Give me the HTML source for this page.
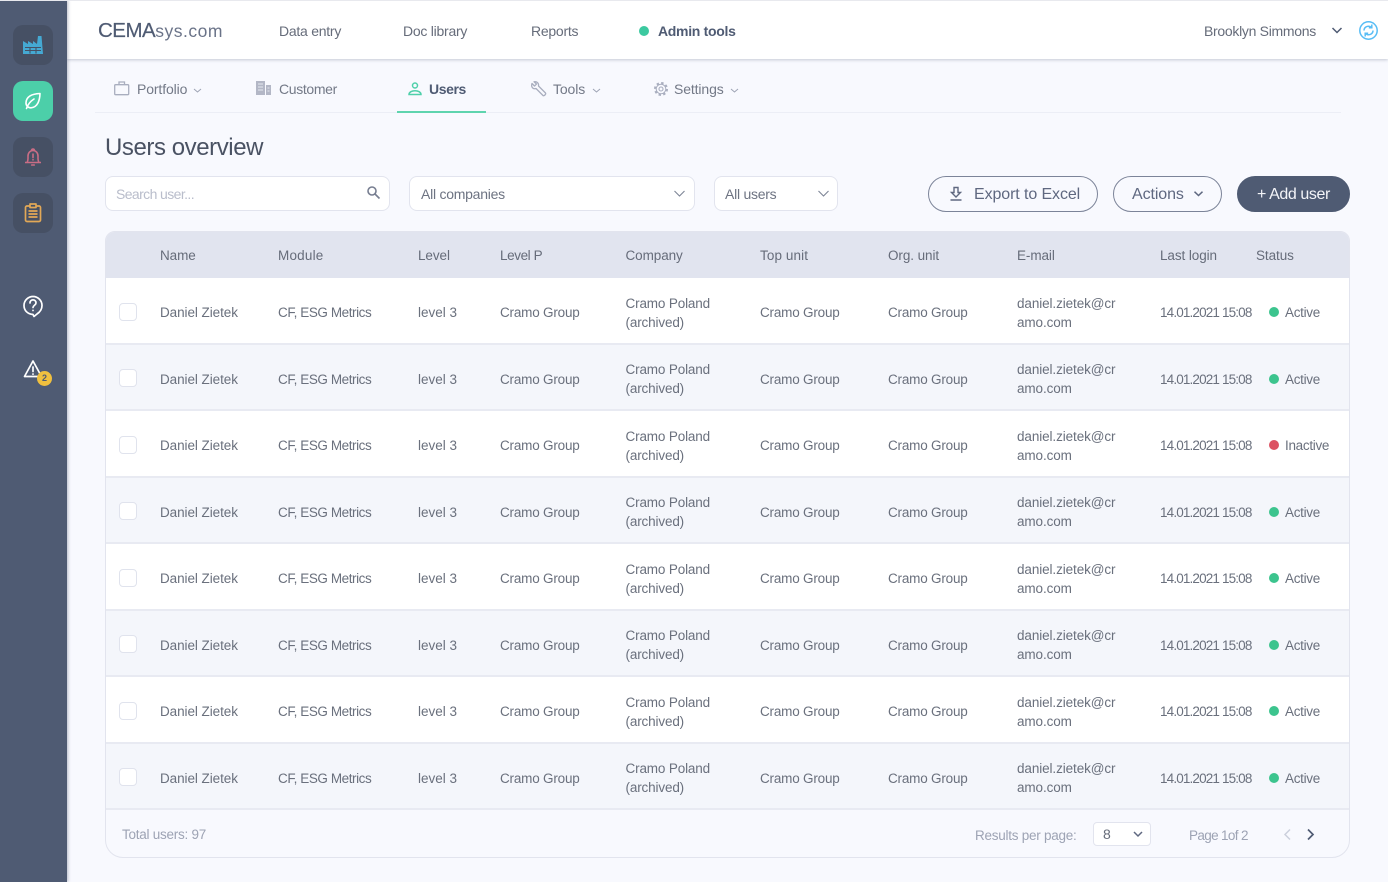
<!DOCTYPE html>
<html><head><meta charset="utf-8"><title>Users overview</title>
<style>
*{box-sizing:border-box}
html,body{margin:0;padding:0;width:1388px;height:882px;overflow:hidden;background:#f8f9fe;font-family:"Liberation Sans",sans-serif;color:#666c7a}
.a{position:absolute;white-space:nowrap}
svg{position:absolute;overflow:visible}
#side{position:absolute;left:0;top:0;width:67px;height:882px;background:#4f5b73;box-shadow:1px 0 3px rgba(60,70,100,.35);z-index:3}
.sb{position:absolute;left:13px;width:40px;height:40px;border-radius:10px;background:#465064}
#top{position:absolute;left:67px;top:1px;width:1321px;height:58px;background:#fff;box-shadow:0 1px 3px rgba(80,90,120,.3);z-index:2}
.nav{font-size:14px;letter-spacing:-.25px;color:#666c7a;top:22px;line-height:18px}
.tab{font-size:14px;letter-spacing:-.12px;color:#737987;top:80px;line-height:18px}
.box{position:absolute;background:#fff;border:1px solid #e2e4ee;border-radius:8px;height:35px;top:176px}
.bt{position:absolute;top:176px;height:36px;border-radius:18px;border:1px solid #7c8499;font-size:16px;color:#5f6880;letter-spacing:-.1px;line-height:35px}
#tbl{position:absolute;left:105px;top:231px;width:1245px;height:627px;border:1px solid #e2e4ee;border-radius:10px 10px 18px 18px;overflow:hidden;background:#f8f9fe}
#th{position:absolute;left:0;top:0;width:1243px;height:46px;background:#e1e4ef}
.h{position:absolute;top:15px;line-height:18px;font-size:13.5px;letter-spacing:-.08px;color:#666c7a;white-space:nowrap}
.r{position:absolute;left:0;width:1243px;height:66.5px;border-bottom:2px solid #e8eaf2;font-size:13.5px;letter-spacing:-.3px;color:#6a707d;background:#fff}
.g{background:#f4f6fb}
.r span{position:absolute;white-space:nowrap;top:26px;line-height:18px}
.r span.t{top:15.5px;line-height:19px}
.r i{position:absolute;left:13px;top:24.5px;width:18px;height:18px;background:#fff;border:1.5px solid #e0e3ed;border-radius:4px}
.r b{position:absolute;left:1163px;top:29px;width:10px;height:10px;border-radius:50%;background:#3cc48e}
.r b.x{background:#dc5262}
.n{left:54px;letter-spacing:-.07px}.m{left:172px;letter-spacing:-.43px}.l{left:312px;letter-spacing:0}.p{left:394px;letter-spacing:-.2px}.c{left:519.5px;letter-spacing:-.15px}.o{left:654px;letter-spacing:-.2px}.u{left:782px;letter-spacing:-.2px}.e{left:911px;letter-spacing:-.1px}.d{left:1054px;letter-spacing:-.85px}.s{left:1179px}
.ft{font-size:13.5px;letter-spacing:-.25px;color:#9da3b4;line-height:18px}
</style></head><body>
<div id="side">
<div class="sb" style="top:25px"></div>
<div class="sb" style="top:81px;background:#4ccfa9"></div>
<div class="sb" style="top:137px"></div>
<div class="sb" style="top:193px"></div>
<svg style="left:23px;top:35px" width="20" height="20" viewBox="0 0 20 20"><path fill="#45a9d3" d="M0 6l5 3V6l5 3V6l4 3 1-8h3.5L20 19H0z"/><path stroke="#465064" stroke-width="1.1" d="M2 12.5h16M2 15.500h16M7 12.500v6M13 12.500v6"/></svg>
<svg style="left:24px;top:92px" width="18" height="18" viewBox="0 0 18 18" fill="none" stroke="#fff" stroke-width="1.600" stroke-linecap="round" stroke-linejoin="round"><path d="M16 1.500C9 1.800 2.500 4 2 10.500c-.2 3 2 5.500 5 5.300C13.500 15.300 15.800 8.500 16 1.500zM2.500 16.500C4 12 6 9.500 10 7"/></svg>
<svg style="left:24px;top:147px" width="18" height="20" viewBox="0 0 18 20" fill="none" stroke="#c96d85" stroke-width="1.600" stroke-linejoin="round"><path d="M1 15.500h16M3 15.500c1.300-2 1-4 1-6.500 0-3 2-5.500 5-5.500s5 2.500 5 5.500c0 2.500-.3 4.500 1 6.500M7.500 3.500C7.800 1.500 10.200 1.500 10.500 3.500"/><path stroke-linecap="round" d="M9 7v3.500M9 12.500v.4M7.700 18h2.600"/></svg>
<svg style="left:24px;top:203px" width="18" height="20" viewBox="0 0 18 20" fill="none" stroke="#e2a857" stroke-width="1.700" stroke-linejoin="round"><rect x="1.500" y="3" width="15" height="15.500" rx="1.500"/><rect x="6" y="1" width="6" height="3.500" fill="#465064"/><path d="M4.500 8h9M4.500 11h9M4.500 14h9"/></svg>
<svg style="left:22px;top:294px" width="22" height="24" viewBox="0 0 22 24" fill="none" stroke="#fff" stroke-width="1.700" stroke-linecap="round" stroke-linejoin="round"><path d="M11 20.500C5.500 20 2 16.500 2 11.500a9 9 0 1 1 18 0c0 4-2 6.500-5 8.500l-3 2.500z"/><path d="M8 9c0-4.200 6-4.200 6 0 0 2-3 2.500-3 4.500M11 16.300v.2"/></svg>
<svg style="left:23px;top:359px" width="20" height="20" viewBox="0 0 20 20" fill="none" stroke="#fff" stroke-width="1.700" stroke-linecap="round" stroke-linejoin="round"><path d="M10 2L1.500 17.500h17zM10 8v4.500M10 15v.2"/></svg>
<div class="a" style="left:37px;top:371px;width:15px;height:15px;border-radius:50%;background:#f0c03f;color:#4f5b73;font-size:9px;font-weight:bold;text-align:center;line-height:15px">2</div>
</div>

<div style="position:absolute;left:0;top:0;width:1388px;height:1px;background:#e8e9ee;z-index:4"></div>
<div id="top"></div>
<div style="position:absolute;left:0;top:0;z-index:3">
<div class="a" style="left:98px;top:18px;font-size:20.500px;line-height:25px;color:#4f5b73;letter-spacing:-.5px;-webkit-text-stroke:.2px #4f5b73">CEMA<span style="font-size:17.500px;letter-spacing:.5px;color:#6a7388;-webkit-text-stroke:0">sys.com</span></div>
<div class="a nav" style="left:279px">Data entry</div>
<div class="a nav" style="left:403px">Doc library</div>
<div class="a nav" style="left:531px">Reports</div>
<div class="a" style="left:639px;top:26px;width:10px;height:10px;border-radius:50%;background:#3cc9a0"></div>
<div class="a nav" style="left:658px;font-weight:bold;color:#4f5b73;letter-spacing:-.3px">Admin tools</div>
<div class="a nav" style="left:1204px;letter-spacing:-.3px">Brooklyn Simmons</div>
<svg style="left:1332px;top:27px" width="10" height="7" fill="none" stroke="#4f5b73" stroke-width="1.500"><path d="M.5 1l4.500 4.500L9.500 1"/></svg>
<svg style="left:1359px;top:21px" width="19" height="19" viewBox="0 0 19 19" fill="none" stroke="#58bdf5" stroke-width="1.500"><circle cx="9.500" cy="9.500" r="8.700"/><path d="M5 9.500c0-3 3-5 6-4l1.500 1M14 9.500c0 3-3 5-6 4l-1.500-1M12.800 3.500v3.300H9.800M6.200 15.500v-3.300h3"/></svg>
</div>

<!-- tabs -->
<svg style="left:114px;top:81px" width="16" height="15" fill="none" stroke="#a9aebf" stroke-width="1.300"><rect x=".7" y="3.700" width="14" height="10" rx="1"/><path d="M5 3.500V1h5.500v2.500"/></svg>
<div class="a tab" style="left:137px">Portfolio</div>
<svg style="left:193px;top:88px" width="9" height="6" fill="none" stroke="#9da3b4"><path d="M1 1l3.500 3L8 1"/></svg>
<svg style="left:256px;top:81px" width="15" height="14"><path fill="#b3b7c6" d="M0 0h9v14H0zM10 4h5v10h-5z"/><path stroke="#f8f9fe" stroke-width=".8" d="M2 3h5M2 6h5M2 9h5M11.500 7h2M11.500 10h2"/></svg>
<div class="a tab" style="left:279px;letter-spacing:-.35px">Customer</div>
<svg style="left:408px;top:82px" width="14" height="14" fill="none" stroke="#4fd0aa" stroke-width="1.500"><circle cx="7" cy="3.500" r="2.500"/><path d="M1 12.500c0-5 12-5 12 0z"/></svg>
<div class="a tab" style="left:429px;font-weight:bold;color:#4f5b73;letter-spacing:-.4px">Users</div>
<svg style="left:530px;top:81px" width="17" height="17" fill="none" stroke="#a9aebf" stroke-width="1.300" stroke-linejoin="round"><path d="M2 2.500L4.500 5l2-2L4 .8C6.500.2 9 2 8.500 5l7 7c.8 1-1.500 3.500-2.500 2.500l-7-7C3 8.500.8 6 2 2.500z"/></svg>
<div class="a tab" style="left:553px">Tools</div>
<svg style="left:592px;top:88px" width="9" height="6" fill="none" stroke="#9da3b4"><path d="M1 1l3.500 3L8 1"/></svg>
<svg style="left:654px;top:82px" width="14" height="14" fill="none" stroke="#a9aebf"><circle cx="7" cy="7" r="6" stroke-width="2" stroke-dasharray="2.400 2.310"/><circle cx="7" cy="7" r="4.800" stroke-width="1"/><circle cx="7" cy="7" r="2" stroke-width="1.100"/></svg>
<div class="a tab" style="left:674px">Settings</div>
<svg style="left:730px;top:88px" width="9" height="6" fill="none" stroke="#9da3b4"><path d="M1 1l3.500 3L8 1"/></svg>
<div class="a" style="left:95px;top:112px;width:1246px;height:1px;background:#eceef6"></div>
<div class="a" style="left:397px;top:111px;width:89px;height:2px;background:#5fd4ae"></div>

<div class="a" style="left:105px;top:132px;font-size:24px;line-height:31px;color:#4a5263;letter-spacing:-.43px">Users overview</div>

<div class="box" style="left:105px;width:285px"></div>
<div class="a" style="left:116px;top:185px;font-size:14px;line-height:18px;color:#b9bdcb;letter-spacing:-.6px">Search user...</div>
<svg style="left:367px;top:186px" width="13" height="13" fill="none" stroke="#767d90" stroke-width="1.600"><circle cx="5" cy="5" r="4"/><path d="M8 8l4.500 4.500"/></svg>
<div class="box" style="left:409px;width:286px"></div>
<div class="a" style="left:421px;top:185px;font-size:14px;line-height:18px;color:#6d7382;letter-spacing:-.25px">All companies</div>
<svg style="left:674px;top:190px" width="11" height="7" fill="none" stroke="#7d8496" stroke-width="1.100"><path d="M.5 1l5 5 5-5"/></svg>
<div class="box" style="left:714px;width:124px"></div>
<div class="a" style="left:725px;top:185px;font-size:14px;line-height:18px;color:#6d7382;letter-spacing:-.25px">All users</div>
<svg style="left:818px;top:190px" width="11" height="7" fill="none" stroke="#7d8496" stroke-width="1.100"><path d="M.5 1l5 5 5-5"/></svg>

<div class="bt" style="left:928px;width:170px"><span class="a" style="left:45px">Export to Excel</span></div>
<svg style="left:950px;top:187px" width="12" height="14" fill="none" stroke="#5f6880" stroke-width="1.400"><path d="M4 0.500h4v5h2.500L6 10 1.500 5.500H4zM.5 13h11"/></svg>
<div class="bt" style="left:1113px;width:109px"><span class="a" style="left:18px">Actions</span></div>
<svg style="left:1194px;top:191px" width="9" height="6" fill="none" stroke="#5f6880" stroke-width="1.500"><path d="M.5 .7l4 3.800 4-3.800"/></svg>
<div class="bt" style="left:1237px;width:113px;background:#4f5b73;border-color:#4f5b73;color:#f3f4f8"><span class="a" style="left:19px;letter-spacing:-.4px">+ Add user</span></div>

<div id="tbl">
<div id="th">
<div class="h" style="left:54px">Name</div><div class="h" style="left:172px;letter-spacing:.2px">Module</div><div class="h" style="left:312px">Level</div><div class="h" style="left:394px;letter-spacing:-.4px">Level P</div><div class="h" style="left:519.500px">Company</div><div class="h" style="left:654px;letter-spacing:.1px">Top unit</div><div class="h" style="left:782px">Org. unit</div><div class="h" style="left:911px">E-mail</div><div class="h" style="left:1054px">Last login</div><div class="h" style="left:1150px">Status</div>
</div>
<div class="r" style="top:46px"><i></i><span class="n">Daniel Zietek</span><span class="m">CF, ESG Metrics</span><span class="l">level 3</span><span class="p">Cramo Group</span><span class="c t">Cramo Poland<br>(archived)</span><span class="o">Cramo Group</span><span class="u">Cramo Group</span><span class="e t">daniel.zietek@cr<br>amo.com</span><span class="d">14.01.2021 15:08</span><b></b><span class="s">Active</span></div>
<div class="r g" style="top:112.500px"><i></i><span class="n">Daniel Zietek</span><span class="m">CF, ESG Metrics</span><span class="l">level 3</span><span class="p">Cramo Group</span><span class="c t">Cramo Poland<br>(archived)</span><span class="o">Cramo Group</span><span class="u">Cramo Group</span><span class="e t">daniel.zietek@cr<br>amo.com</span><span class="d">14.01.2021 15:08</span><b></b><span class="s">Active</span></div>
<div class="r" style="top:179px"><i></i><span class="n">Daniel Zietek</span><span class="m">CF, ESG Metrics</span><span class="l">level 3</span><span class="p">Cramo Group</span><span class="c t">Cramo Poland<br>(archived)</span><span class="o">Cramo Group</span><span class="u">Cramo Group</span><span class="e t">daniel.zietek@cr<br>amo.com</span><span class="d">14.01.2021 15:08</span><b class="x"></b><span class="s">Inactive</span></div>
<div class="r g" style="top:245.500px"><i></i><span class="n">Daniel Zietek</span><span class="m">CF, ESG Metrics</span><span class="l">level 3</span><span class="p">Cramo Group</span><span class="c t">Cramo Poland<br>(archived)</span><span class="o">Cramo Group</span><span class="u">Cramo Group</span><span class="e t">daniel.zietek@cr<br>amo.com</span><span class="d">14.01.2021 15:08</span><b></b><span class="s">Active</span></div>
<div class="r" style="top:312px"><i></i><span class="n">Daniel Zietek</span><span class="m">CF, ESG Metrics</span><span class="l">level 3</span><span class="p">Cramo Group</span><span class="c t">Cramo Poland<br>(archived)</span><span class="o">Cramo Group</span><span class="u">Cramo Group</span><span class="e t">daniel.zietek@cr<br>amo.com</span><span class="d">14.01.2021 15:08</span><b></b><span class="s">Active</span></div>
<div class="r g" style="top:378.500px"><i></i><span class="n">Daniel Zietek</span><span class="m">CF, ESG Metrics</span><span class="l">level 3</span><span class="p">Cramo Group</span><span class="c t">Cramo Poland<br>(archived)</span><span class="o">Cramo Group</span><span class="u">Cramo Group</span><span class="e t">daniel.zietek@cr<br>amo.com</span><span class="d">14.01.2021 15:08</span><b></b><span class="s">Active</span></div>
<div class="r" style="top:445px"><i></i><span class="n">Daniel Zietek</span><span class="m">CF, ESG Metrics</span><span class="l">level 3</span><span class="p">Cramo Group</span><span class="c t">Cramo Poland<br>(archived)</span><span class="o">Cramo Group</span><span class="u">Cramo Group</span><span class="e t">daniel.zietek@cr<br>amo.com</span><span class="d">14.01.2021 15:08</span><b></b><span class="s">Active</span></div>
<div class="r g" style="top:511.500px"><i></i><span class="n">Daniel Zietek</span><span class="m">CF, ESG Metrics</span><span class="l">level 3</span><span class="p">Cramo Group</span><span class="c t">Cramo Poland<br>(archived)</span><span class="o">Cramo Group</span><span class="u">Cramo Group</span><span class="e t">daniel.zietek@cr<br>amo.com</span><span class="d">14.01.2021 15:08</span><b></b><span class="s">Active</span></div>
</div>

<div class="a ft" style="left:122px;top:826px">Total users: 97</div>
<div class="a ft" style="left:975px;top:827px">Results per page:</div>
<div class="a" style="left:1093px;top:822px;width:58px;height:24px;background:#fff;border:1px solid #e2e4ee;border-radius:4px"></div>
<div class="a" style="left:1103px;top:825px;font-size:14px;line-height:18px;color:#666c7a">8</div>
<svg style="left:1133px;top:831px" width="10" height="7" fill="none" stroke="#5f6880" stroke-width="1.500"><path d="M1 1l4 4 4-4"/></svg>
<div class="a ft" style="left:1189px;top:827px;letter-spacing:-.65px">Page 1of 2</div>
<svg style="left:1284px;top:829px" width="7" height="11" fill="none" stroke="#ccd0dc" stroke-width="1.500"><path d="M6 .5l-5 5 5 5"/></svg>
<svg style="left:1307px;top:829px" width="7" height="11" fill="none" stroke="#4f5b73" stroke-width="1.700"><path d="M1 .5l5 5-5 5"/></svg>
</body></html>
